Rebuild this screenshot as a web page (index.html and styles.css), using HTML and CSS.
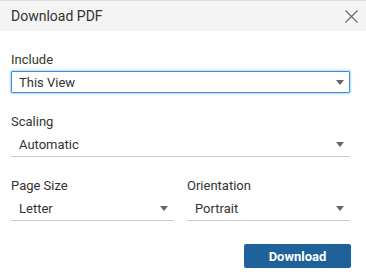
FILE: index.html
```html
<!DOCTYPE html>
<html lang="en">
<head>
  <meta charset="UTF-8" />
  <title>Download PDF</title>
  <link rel="stylesheet" href="styles.css">
</head>
<body>
  <div class="dialog">
    <div class="header">
      <span class="title">Download PDF</span>
      <svg class="close" width="13" height="13" viewBox="0 0 13 13">
        <path d="M0.5 0.5 L12.5 12.5 M12.5 0.5 L0.5 12.5" stroke="#666" stroke-width="1.1" fill="none"/>
      </svg>
    </div>

    <div class="body">
      <div class="field">
        <span class="label">Include</span>
        <div class="select focused">
          <span>This View</span>
          <span class="caret"></span>
        </div>
      </div>

      <div class="field">
        <span class="label">Scaling</span>
        <div class="select">
          <span>Automatic</span>
          <span class="caret"></span>
        </div>
      </div>

      <div class="row">
        <div class="field">
          <span class="label">Page Size</span>
          <div class="select">
            <span>Letter</span>
            <span class="caret"></span>
          </div>
        </div>
        <div class="field">
          <span class="label">Orientation</span>
          <div class="select">
            <span>Portrait</span>
            <span class="caret"></span>
          </div>
        </div>
      </div>

      <div class="actions">
        <button class="btn">Download</button>
      </div>
    </div>
  </div>
</body>
</html>
```

FILE: styles.css
```css
body {
  margin: 0;
  font-family: Roboto, "Noto Sans", sans-serif;
  font-size: 13px;
  color: #333;
  background: #fff;
}

.dialog {
  width: 366px;
  height: 277px;
  border-top: 1px solid #dcdcdc;
  box-sizing: border-box;
}

.header {
  display: flex;
  justify-content: space-between;
  align-items: center;
  height: 30px;
  padding: 0 8px 0 11px;
  background: #f4f4f4;
}

.title {
  font-size: 14px;
  color: #333;
}

.close {
  display: block;
}

.body {
  padding: 21px 16px 0 11px;
}

.field {
  display: flex;
  flex-direction: column;
  margin-bottom: 21px;
}

.label {
  line-height: 16px;
  margin-bottom: 3px;
}

.select {
  display: flex;
  justify-content: space-between;
  align-items: center;
  height: 24px;
  padding: 0 6px 0 8px;
  border-bottom: 1px solid #c8c8c8;
  box-sizing: border-box;
}

.select.focused {
  height: 22px;
  border: 1px solid #3b8ddc;
  border-radius: 1px;
  box-shadow: 0 0 2px 1px rgba(90, 160, 230, 0.45);
  padding-left: 7px;
  padding-right: 5px;
}

.caret {
  width: 0;
  height: 0;
  border-left: 4px solid transparent;
  border-right: 4px solid transparent;
  border-top: 5px solid #666;
}

.row {
  display: flex;
  gap: 13px;
}

.row .field {
  flex: 1;
  margin-bottom: 0;
}

.actions {
  display: flex;
  justify-content: flex-end;
  margin-top: 23px;
}

.btn {
  width: 107px;
  height: 24px;
  border: none;
  border-radius: 2px;
  background: #1f6299;
  color: #fff;
  font-family: Roboto, "Noto Sans", sans-serif;
  font-weight: bold;
  font-size: 13px;
  margin-right: -1px;
}
```
